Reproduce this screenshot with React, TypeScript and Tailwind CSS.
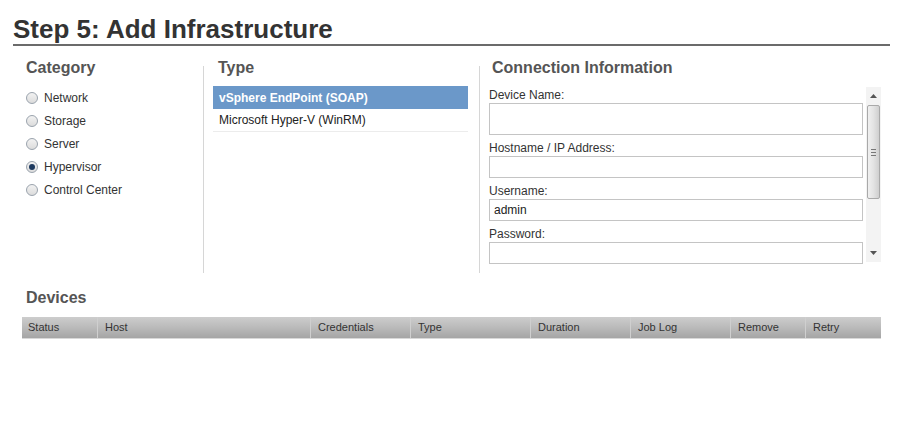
import React from 'react'

const font = { fontFamily: '"Liberation Sans", Arial, sans-serif' }

const categories = ['Network', 'Storage', 'Server', 'Hypervisor', 'Control Center']
const types = ['vSphere EndPoint (SOAP)', 'Microsoft Hyper-V (WinRM)']

const columns = [
  { label: 'Status', w: 'w-[75px]' },
  { label: 'Host', w: 'w-[213px]' },
  { label: 'Credentials', w: 'w-[100px]' },
  { label: 'Type', w: 'w-[120px]' },
  { label: 'Duration', w: 'w-[100px]' },
  { label: 'Job Log', w: 'w-[100px]' },
  { label: 'Remove', w: 'w-[75px]' },
  { label: 'Retry', w: 'flex-1' },
]

function Radio({ checked }: { checked?: boolean }) {
  return (
    <span className="w-[12px] h-[12px] rounded-full border border-[#9aa3ad] bg-gradient-to-b from-[#f2f2f2] to-[#dcdcdc] flex items-center justify-center shrink-0">
      {checked && <span className="w-[6px] h-[6px] rounded-full bg-[#1e3a5f]" />}
    </span>
  )
}

function Field({ label, value, tall, first }: { label: string; value?: string; tall?: boolean; first?: boolean }) {
  return (
    <div className={first ? '' : 'mt-[6px]'}>
      <div className="h-[14px] leading-[14px] text-[12px] text-[#333]">{label}</div>
      <div
        className={`mt-[1px] border border-[#c4c4c4] bg-white px-[4px] text-[12px] text-[#222] leading-[20px] ${tall ? 'h-[32px]' : 'h-[22px]'}`}
      >
        {value}
      </div>
    </div>
  )
}

function Scrollbar() {
  return (
    <div className="w-[15px] h-[175px] -mt-[1px] bg-[#f3f3f3] flex flex-col items-center">
      <div className="h-[18px] flex items-center justify-center">
        <svg width="7" height="4" viewBox="0 0 7 4"><path d="M0 4 L3.5 0 L7 4 Z" fill="#555" /></svg>
      </div>
      <div className="w-[13px] h-[94px] rounded-[2px] border border-[#a9a9a9] bg-gradient-to-r from-[#f0f0f0] via-[#e3e3e3] to-[#cfcfcf] flex flex-col items-center justify-center gap-[2px]">
        <span className="w-[5px] h-px bg-[#777]" />
        <span className="w-[5px] h-px bg-[#777]" />
        <span className="w-[5px] h-px bg-[#777]" />
      </div>
      <div className="flex-1" />
      <div className="h-[18px] flex items-center justify-center">
        <svg width="7" height="4" viewBox="0 0 7 4"><path d="M0 0 L3.5 4 L7 0 Z" fill="#555" /></svg>
      </div>
    </div>
  )
}

export default function App() {
  return (
    <div className="w-[906px] h-[425px] bg-white pl-[13px] pr-[16px] pt-[14px]" style={font}>
      <h1 className="text-[26px] font-bold leading-[30px] text-[#333] border-b-2 border-[#6b6b6b]">
        Step 5: Add Infrastructure
      </h1>

      <div className="flex pl-[9px] mt-[12px]">
        {/* Category */}
        <div className="w-[181px]">
          <h2 className="text-[16px] font-bold text-[#555] leading-[20px] pl-[4px]">Category</h2>
          <div className="mt-[8px] pl-[4px] flex flex-col">
            {categories.map(c => (
              <label key={c} className="h-[23px] flex items-center gap-[6px] text-[12px] text-[#333]">
                <Radio checked={c === 'Hypervisor'} />
                {c}
              </label>
            ))}
          </div>
        </div>
        <div className="w-px bg-[#d6d6d6] mt-[8px] h-[207px]" />

        {/* Type */}
        <div className="w-[275px] pl-[9px] pr-[11px]">
          <h2 className="text-[16px] font-bold text-[#555] leading-[20px] pl-[5px]">Type</h2>
          <div className="mt-[8px]">
            {types.map((t, i) => (
              <div
                key={t}
                className={`h-[23px] flex items-center px-[6px] text-[12px] ${i === 0 ? 'bg-[#6b98c9] text-white font-bold' : 'text-[#222] border-b border-[#ececec]'}`}
              >
                {t}
              </div>
            ))}
          </div>
        </div>
        <div className="w-px bg-[#d6d6d6] mt-[8px] h-[207px]" />

        {/* Connection Information */}
        <div className="flex-1 pl-[9px]">
          <h2 className="text-[16px] font-bold text-[#555] leading-[20px] pl-[3px]">Connection Information</h2>
          <div className="mt-[10px] flex gap-[3px] pr-[9px]">
            <div className="flex-1">
              <Field label="Device Name:" tall first />
              <Field label="Hostname / IP Address:" />
              <Field label="Username:" value="admin" />
              <Field label="Password:" />
            </div>
            <Scrollbar />
          </div>
        </div>
      </div>

      <h2 className="text-[16px] font-bold text-[#555] leading-[20px] mt-[15px] pl-[13px]">Devices</h2>
      <div className="mt-[9px] ml-[9px] mr-[9px] h-[22px] flex bg-gradient-to-b from-[#cdcdcd] via-[#bababa] to-[#a5a5a5] border-b border-[#d8d8d8]">
        {columns.map((c, i) => (
          <div
            key={c.label}
            className={`${c.w} h-full flex items-center text-[11px] text-[#333] ${i === 0 ? 'pl-[6px]' : 'pl-[7px] border-l border-[#cfcfcf]'}`}
          >
            {c.label}
          </div>
        ))}
      </div>
    </div>
  )
}
